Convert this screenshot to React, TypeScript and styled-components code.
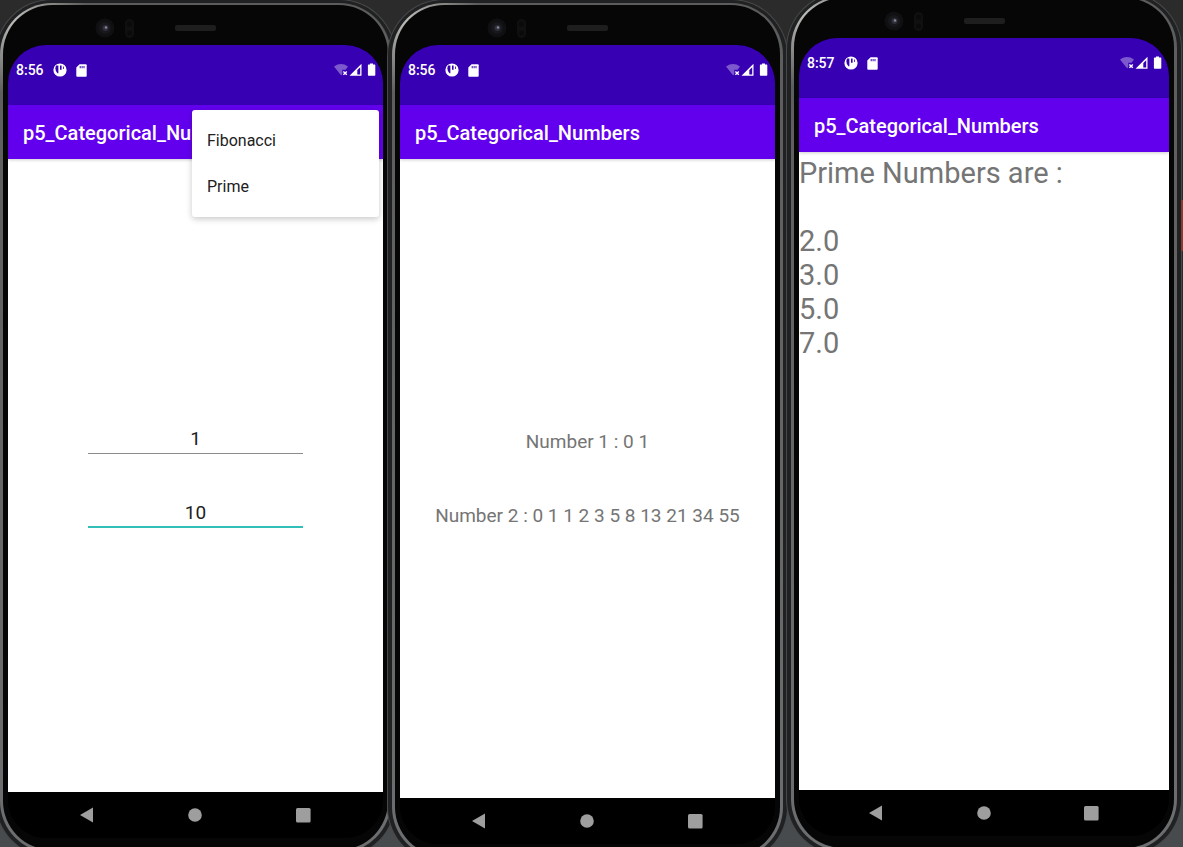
import React from 'react';
import styled, { createGlobalStyle } from 'styled-components';

const GlobalStyle = createGlobalStyle`
  *, *::before, *::after { box-sizing: border-box; }
  body {
    margin: 0;
    font-family: Roboto, "Liberation Sans", sans-serif;
    background: #2b2b2b;
  }
  h1, p, ul { margin: 0; padding: 0; }
`;

const Desk = styled.main`
  display: flex;
  position: relative;
  height: 100vh;
  min-height: 640px;
  padding-right: 2px;
  overflow: hidden;
  background: linear-gradient(#2b2b2b 0, #2b2b2b 60%, #474b4e 96%);
`;

const Shell = styled.section<{ $grow: number; $top: number; $bottom: number; $left: number }>`
  flex: ${(p) => p.$grow} 1 0;
  min-width: 0;
  display: flex;
  padding: 3px 4px 4px;
  margin: ${(p) => `-${p.$top}px 0 -${p.$bottom}px -${p.$left}px`};
  border-radius: 56px;
  background: #1f2122;
  box-shadow: 0 0 0 1px #48494a;
`;

const Rail = styled.div`
  flex: 1;
  min-width: 0;
  display: flex;
  padding: 2px 3px 3px;
  border-radius: 52px;
  background:
    radial-gradient(circle at 12px 16px, #bdbdba 0, #a0a09e 22px, transparent 75px),
    linear-gradient(#5c5c5c, #6d6e6f);
`;

const Bezel = styled.div`
  flex: 1;
  min-width: 0;
  display: flex;
  flex-direction: column;
  padding: 0 5px 12px;
  border-radius: 49px;
  background: #060607;
`;

const Sensors = styled.svg`
  display: block;
  flex: none;
  align-self: center;
  width: 240px;
  height: 40px;
`;

const Screen = styled.div`
  position: relative;
  flex: 1;
  min-height: 0;
  display: flex;
  flex-direction: column;
  overflow: hidden;
  border-radius: 38px;
  background: #000;
`;

const StatusBar = styled.header`
  flex: none;
  display: flex;
  align-items: center;
  justify-content: space-between;
  height: 60px;
  padding: 0 7px 10px 8px;
  background: #3700b3;
  color: #fff;
  font-size: 14px;
  font-weight: 500;
`;

const StatusGroup = styled.div`
  display: flex;
  align-items: center;
  gap: 9px;

  svg { display: block; }
`;

const AppBar = styled.div`
  position: relative;
  flex: none;
  display: flex;
  align-items: center;
  height: 54px;
  padding: 2px 15px 0;
  background: #6200ee;
  box-shadow: 0 1px 3px rgba(0, 0, 0, 0.2);
`;

const Title = styled.h1`
  color: #fff;
  font-size: 20px;
  font-weight: 500;
  line-height: 24px;
  white-space: nowrap;
`;

const Menu = styled.ul`
  position: absolute;
  top: 65px;
  right: 4px;
  width: 187px;
  padding: 8px 0 7px;
  list-style: none;
  border-radius: 3px;
  background: #fff;
  box-shadow: 0 2px 6px rgba(0, 0, 0, 0.22);
`;

const MenuItem = styled.button`
  display: block;
  width: 100%;
  height: 46px;
  padding: 0 15px;
  border: 0;
  background: none;
  color: #212121;
  font: 400 16px/24px Roboto, sans-serif;
  text-align: left;
`;

const Centered = styled.div`
  flex: 1;
  display: flex;
  flex-direction: column;
  align-items: center;
  justify-content: center;
  gap: 44px;
  background: #fff;
`;

const NumberField = styled.input<{ $active?: boolean }>`
  width: 215px;
  height: 30px;
  padding: 0;
  border: 0;
  border-radius: 0;
  outline: 0;
  background: none;
  box-shadow: inset 0 ${(p) => (p.$active ? '-2px #32bfb8' : '-1px #8c8c8c')};
  color: #212121;
  font: 400 19px/30px Roboto, sans-serif;
  text-align: center;
`;

const Result = styled.p`
  color: #757575;
  font-size: 19px;
  line-height: 30px;
  white-space: nowrap;
`;

const PrimeList = styled.div`
  flex: 1;
  padding-top: 4px;
  background: #fff;
  color: #757575;
  font-size: 29px;
  line-height: 34px;
  white-space: pre-line;
`;

const NavBar = styled.nav`
  flex: none;
  display: flex;
  justify-content: center;
  height: 46px;
  background: #000;
`;

const NavButton = styled.button`
  display: grid;
  place-items: center;
  width: 108px;
  padding: 0;
  border: 0;
  background: none;

  svg { display: block; fill: #9e9e9e; }
`;

const PowerKey = styled.div`
  position: absolute;
  top: 200px;
  right: 0;
  width: 2px;
  height: 51px;
  background: #8c3a2e;
`;

const SensorRow = () => (
  <Sensors viewBox="0 -2 240 40" aria-hidden="true">
    <circle cx="30" cy="21" r="9.5" fill="#101012" />
    <circle cx="30" cy="21" r="6" fill="#18181c" />
    <circle cx="30.5" cy="21" r="3" fill="#30303a" />
    <circle cx="31" cy="20.5" r="1.2" fill="#85889a" />
    <rect x="50" y="12" width="9" height="19" rx="4.5" fill="#101011" />
    <circle cx="54.5" cy="17" r="2.5" fill="#0a0a0b" />
    <circle cx="54.5" cy="26" r="2.5" fill="#0a0a0b" />
    <rect x="100" y="18" width="41" height="6" rx="2" fill="#1e1e1f" />
  </Sensors>
);

const StatusIcons = () => (
  <>
    <svg width="14" height="14" viewBox="0 0 14 14" aria-hidden="true">
      <circle cx="7" cy="7" r="6.6" fill="#fff" />
      <path d="M3.2 2.6H5.4V10.2H4.4Q2.4 8.4 2.4 5.6Q2.4 3.8 3.2 2.6Z" fill="#3700b3" />
      <path d="M7 2.6H8.6V6.8H7ZM10.2 3.4H11V6H10.2Z" fill="#3700b3" />
    </svg>
    <svg width="11" height="13" viewBox="0 0 11 13" aria-hidden="true">
      <path d="M3.6 0.3H9.8Q10.7 0.3 10.7 1.2V11.8Q10.7 12.7 9.8 12.7H1.2Q0.3 12.7 0.3 11.8V3.6Z" fill="#fff" />
      <path d="M3.7 2H4.7V4.3H3.7ZM5.6 2H6.6V4.3H5.6ZM7.5 2H8.5V4.3H7.5Z" fill="#3700b3" />
    </svg>
  </>
);

const SystemIcons = () => (
  <svg width="42" height="14" viewBox="0 0 42 14" aria-hidden="true">
    <path d="M0 3.4Q7 -1.4 14 3.4L11.6 6.8H8.3V11L7.2 12.5Z" fill="#fff" fillOpacity="0.35" />
    <path d="M9.4 8.4L12.8 11.8M12.8 8.4L9.4 11.8" stroke="#fff" strokeWidth="1.4" />
    <path d="M27.5 0.8V12.8H15.5ZM26.2 4.2L23.3 7.1V11.5H26.2Z" fill="#fff" fillRule="evenodd" />
    <path d="M36 0.4H39V1.6H40.6Q41.3 1.6 41.3 2.3V12.1Q41.3 12.8 40.6 12.8H34.6Q33.9 12.8 33.9 12.1V2.3Q33.9 1.6 34.6 1.6H36Z" fill="#fff" />
  </svg>
);

type PhoneProps = {
  time: string;
  grow: number;
  top: number;
  bottom: number;
  left: number;
  menu?: React.ReactNode;
  children: React.ReactNode;
};

const Phone = ({ time, grow, top, bottom, left, menu, children }: PhoneProps) => (
  <Shell $grow={grow} $top={top} $bottom={bottom} $left={left}>
    <Rail>
      <Bezel>
        <SensorRow />
        <Screen>
          <StatusBar>
            <StatusGroup>
              <span>{time}</span>
              <StatusIcons />
            </StatusGroup>
            <SystemIcons />
          </StatusBar>
          <AppBar>
            <Title>p5_Categorical_Numbers</Title>
          </AppBar>
          {children}
          <NavBar>
            <NavButton aria-label="Back">
              <svg width="14" height="16" viewBox="0 0 14 16"><path d="M0 8L13 0.5V15.5Z" /></svg>
            </NavButton>
            <NavButton aria-label="Home">
              <svg width="14" height="14" viewBox="0 0 14 14"><circle cx="7" cy="7" r="6.8" /></svg>
            </NavButton>
            <NavButton aria-label="Overview">
              <svg width="15" height="15" viewBox="0 0 15 15"><rect width="14.6" height="14.6" rx="1.5" /></svg>
            </NavButton>
          </NavBar>
          {menu}
        </Screen>
      </Bezel>
    </Rail>
  </Shell>
);

const CategoryMenu = () => (
  <Menu>
    <li><MenuItem>Fibonacci</MenuItem></li>
    <li><MenuItem>Prime</MenuItem></li>
  </Menu>
);

const primes = ['2.0', '3.0', '5.0', '7.0'];

export default function App() {
  return (
    <>
      <GlobalStyle />
      <Desk>
        <Phone time="8:56" grow={399} top={0} bottom={10} left={4} menu={<CategoryMenu />}>
          <Centered>
            <NumberField aria-label="First number" defaultValue="1" />
            <NumberField aria-label="Second number" defaultValue="10" $active />
          </Centered>
        </Phone>
        <Phone time="8:56" grow={399} top={0} bottom={16} left={7}>
          <Centered>
            <Result>Number 1 : 0 1</Result>
            <Result>Number 2 : 0 1 1 2 3 5 8 13 21 34 55</Result>
          </Centered>
        </Phone>
        <Phone time="8:57" grow={394} top={7} bottom={8} left={0}>
          <PrimeList>{`Prime Numbers are :\n\n${primes.join('\n')}`}</PrimeList>
        </Phone>
        <PowerKey />
      </Desk>
    </>
  );
}
